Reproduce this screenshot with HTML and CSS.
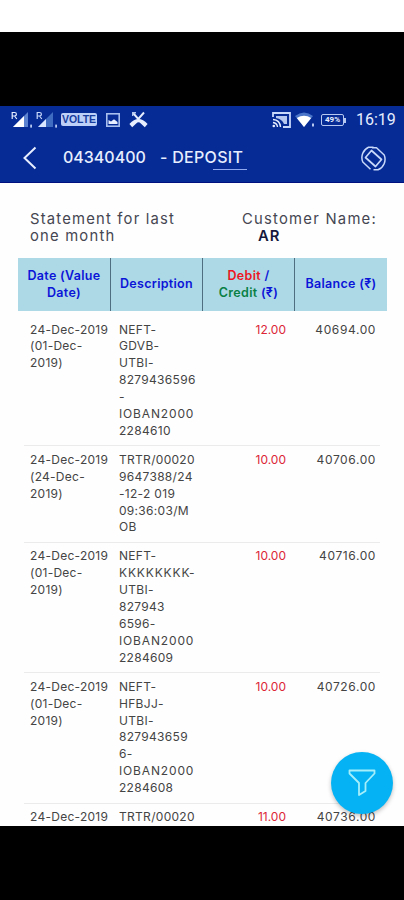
FILE: index.html
```
<!DOCTYPE html>
<html lang="en">
<head>
    <meta charset="UTF-8">
    <meta name="viewport" content="width=device-width, initial-scale=1.0">
    <title>Deposit statement</title>
    <link rel="stylesheet" href="styles.css">
</head>
<body>
<div class="phone">
  <header class="top">
    <div class="status">
      <svg class="signal" width="21" height="18" viewBox="0 0 21 18">
        <path d="M17 1V16H2Z" fill="#5c83cf"/><path d="M13 5V16H2Z" fill="#fff"/>
        <rect x="0" y="0" width="7" height="9" fill="#062b94"/>
        <path d="M1.2 8V1.5H3.6Q5.4 1.5 5.4 3.2T3.6 5H1.2M3.6 5L5.8 8" fill="none" stroke="#e7eeff" stroke-width="1.2"/>
        <rect x="19.2" y="13.6" width="1.8" height="3" fill="#b6c8f0"/>
      </svg>
      <svg class="signal" width="21" height="18" viewBox="0 0 21 18">
        <path d="M17 1V16H2Z" fill="#3f6bc0"/><path d="M10 8V16H2Z" fill="#d9e6ff"/>
        <rect x="0" y="0" width="7" height="9" fill="#062b94"/>
        <path d="M1.2 8V1.5H3.6Q5.4 1.5 5.4 3.2T3.6 5H1.2M3.6 5L5.8 8" fill="none" stroke="#c8d8fa" stroke-width="1.2"/>
        <rect x="19.2" y="13.6" width="1.8" height="3" fill="#b6c8f0"/>
      </svg>
      <span class="volte">VOLTE</span>
      <svg class="picture" width="14" height="14" viewBox="0 0 14 14">
        <rect x=".8" y=".8" width="12.4" height="12.4" fill="none" stroke="#a9c0ee" stroke-width="1.6"/>
        <path d="M2.5 11V7L5 8.5L8 6.2L11.5 9V11Z" fill="#e7eeff"/>
      </svg>
      <svg class="missed" width="19" height="17" viewBox="0 0 19 17">
        <path d="M4 2L9.3 8L15 1.5" fill="none" stroke="#e7eeff" stroke-width="1.9"/>
        <path d="M3.7 5V1.7H7" fill="none" stroke="#b6c8f0" stroke-width="1.4"/>
        <path d="M.4 13Q9.5 3 18.6 13L15.8 16.2L11.8 12.6Q9.5 10 7.2 12.6L3.2 16.2Z" fill="#e7eeff"/>
      </svg>
      <svg class="cast" width="19" height="16" viewBox="0 0 19 16">
        <path d="M1 5V1H18V15H11" fill="none" stroke="#c8d8fa" stroke-width="1.8"/>
        <path d="M4 4H15V12H12Q10 7 4 6Z" fill="#b6c8f0"/>
        <path d="M1 7.5Q8 8 8.5 15M1 10.5Q5 11 5.5 15" fill="none" stroke="#e7eeff" stroke-width="1.4"/>
        <circle cx="1.8" cy="14" r="1.3" fill="#e7eeff"/>
      </svg>
      <svg class="wifi" width="20" height="16" viewBox="0 0 20 16">
        <path d="M0 4Q9 -3 18 4L9 15Z" fill="#4a75c8"/>
        <path d="M1.8 6Q9 1.4 16.2 6L9 15Z" fill="#fff"/>
        <rect x="17" y="11.5" width="2" height="3" fill="#b6c8f0"/>
      </svg>
      <span class="battery">49%</span>
      <span class="time">16:19</span>
    </div>
    <div class="titlebar">
      <svg width="14" height="24" viewBox="0 0 14 24"><path d="M12.5 1.5L1.5 12L12.5 22.5" fill="none" stroke="#e7eeff" stroke-width="2"/></svg>
      <h1 class="account">04340400</h1>
      <h1 class="kind">- DEPOSIT</h1>
      <svg class="rotate" width="25" height="25" viewBox="0 0 25 25" fill="none" stroke="#c8d8fa">
        <path d="M10.5 4.5L20.5 13.5L14.5 20.5L4.5 11.5Z" stroke-width="1.7" stroke-linejoin="round"/>
        <path d="M12.5 1.2H7.5A11.4 11.4 0 0 0 1.8 16L9.5 23.2M12.5 23.8H17A11.4 11.4 0 0 0 23.2 9L15.5 1.8H11" stroke-width="1.5" stroke-linejoin="round"/>
      </svg>
    </div>
  </header>

  <main class="content">
    <div class="intro">
      <p class="period">Statement for last<br>one month</p>
      <p class="customer">Customer Name:<br><b>AR</b></p>
    </div>
    <div class="row head">
      <div>Date (Value<br>Date)</div>
      <div>Description</div>
      <div><span><span class="debit">Debit</span> /<br><span class="credit">Credit</span> (₹)</span></div>
      <div>Balance (₹)</div>
    </div>
    <div class="list">
      <div class="row">
        <div class="date">24-Dec-2019<br>(01-Dec-<br>2019)</div>
        <div class="desc">NEFT-<br>GDVB-<br>UTBI-<br>8279436596<br>-<br><span class="wide">IOBAN2000</span><br>2284610</div>
        <div class="amount">12.00</div>
        <div class="balance">40694.00</div>
      </div>
      <div class="row">
        <div class="date">24-Dec-2019<br>(24-Dec-<br>2019)</div>
        <div class="desc">TRTR/00020<br>9647388/24<br>-12-2 019<br>09:36:03/M<br>OB</div>
        <div class="amount">10.00</div>
        <div class="balance">40706.00</div>
      </div>
      <div class="row">
        <div class="date">24-Dec-2019<br>(01-Dec-<br>2019)</div>
        <div class="desc">NEFT-<br><span class="wide">KKKKKKKK-</span><br>UTBI-<br>827943<br>6596-<br><span class="wide">IOBAN2000</span><br>2284609</div>
        <div class="amount">10.00</div>
        <div class="balance">40716.00</div>
      </div>
      <div class="row">
        <div class="date">24-Dec-2019<br>(01-Dec-<br>2019)</div>
        <div class="desc">NEFT-<br>HFBJJ-<br>UTBI-<br>827943659<br>6-<br><span class="wide">IOBAN2000</span><br>2284608</div>
        <div class="amount">10.00</div>
        <div class="balance">40726.00</div>
      </div>
      <div class="row">
        <div class="date">24-Dec-2019</div>
        <div class="desc">TRTR/00020</div>
        <div class="amount">11.00</div>
        <div class="balance">40736.00</div>
      </div>
    </div>
    <button class="filter" aria-label="Filter">
      <svg width="28" height="28" viewBox="0 0 28 28"><path d="M1.5 1.5H26.5V4.5L17.5 14V22L11 26V14L1.5 4.5Z" fill="none" stroke="#a5eefa" stroke-width="1.8" stroke-linejoin="round"/></svg>
    </button>
  </main>
</div>
</body>
</html>
```
FILE: styles.css
```
*{
  box-sizing: border-box;
}
body{
  margin: 0;
  background: #fff;
  font-family: Inter, "Open Sans", sans-serif;
}
.phone{
  height: 868px;
  margin-top: 32px;
  padding: 74px 0;
  background: #000;
  display: flex;
  flex-direction: column;
}
.top{
  height: 77px;
  flex: none;
  background: #062b94;
  border-bottom: 1px solid #00107e;
  color: #e7eeff;
}
.status{
  display: flex;
  align-items: center;
  height: 27px;
  padding: 0 9px 0 11px;
}
.signal{
  margin-right: 4px;
}
.volte{
  width: 36px;
  height: 13px;
  border-radius: 2px;
  background: #bdd0f7;
  color: #173d9f;
  font: bold 10.5px/13px "Liberation Sans", sans-serif;
  text-align: center;
}
.picture{
  margin-left: 9px;
}
.missed{
  margin-left: 9px;
}
.cast{
  margin-left: auto;
}
.wifi{
  margin-left: 4px;
}
.battery{
  position: relative;
  width: 23px;
  height: 12px;
  margin-left: 6px;
  border: 1px solid #b6c8f0;
  border-radius: 2px;
  font: bold 8px/10px Roboto, sans-serif;
  text-align: center;
}
.battery::after{
  content: "";
  position: absolute;
  right: -3px;
  top: 3px;
  width: 2px;
  height: 5px;
  background: #b6c8f0;
}
.time{
  width: 39px;
  margin-left: 12px;
  font: 16px/20px Roboto, sans-serif;
  white-space: nowrap;
}
.titlebar{
  display: flex;
  align-items: center;
  height: 49px;
  padding: 1px 18px 0 23px;
}
.titlebar h1{
  margin: 0 0 3px;
  font-size: 16px;
  line-height: 26px;
  font-weight: 500;
  white-space: nowrap;
}
.titlebar .account{
  width: 83px;
  margin-left: 26px;
}
.titlebar .kind{
  position: relative;
  margin-left: 14px;
  letter-spacing: .3px;
}
.kind::after{
  content: "";
  position: absolute;
  right: -4px;
  bottom: 0;
  width: 34px;
  height: 1px;
  background: #91aaf0;
}
.rotate{
  margin-left: auto;
}
.content{
  position: relative;
  flex: 1;
  min-height: 0;
  overflow: hidden;
  background: #fefefe;
}
.intro{
  display: flex;
  justify-content: space-between;
  height: 75px;
  padding: 28px 27px 0 30px;
  font-size: 14.8px;
  line-height: 17px;
  color: #454652;
}
.intro p{
  margin: 0;
}
.period{
  letter-spacing: 1.2px;
}
.customer{
  letter-spacing: 1.25px;
}
.customer b{
  margin-left: 16px;
  font-weight: 600;
  letter-spacing: 1px;
  color: #15183c;
}
.row{
  display: grid;
  grid-template-columns: 89px 91px 76px 1fr;
  margin: 0 24px;
  padding: 5.5px 4px 5.5px 6px;
  border-bottom: 1px solid #ebebeb;
  font-size: 12px;
  line-height: 16.9px;
  color: #444;
  white-space: nowrap;
}
.head{
  grid-template-columns: 92px 92px 92px 1fr;
  height: 53px;
  margin: 0 17px 0 18px;
  padding: 0;
  border: 0;
  background: #add9e6;
  color: #0b15d8;
  font-size: 12.5px;
  font-weight: 600;
  letter-spacing: .3px;
  text-align: center;
}
.head div{
  display: flex;
  align-items: center;
  justify-content: center;
}
.head div + div{
  border-left: 1px solid #4f6f80;
}
.debit{
  color: #ed1622;
}
.credit{
  color: #098044;
}
.list{
  padding-top: 5px;
}
.date{
  letter-spacing: .27px;
}
.desc{
  letter-spacing: .3px;
}
.wide{
  letter-spacing: .85px;
}
.amount{
  color: #dc2638;
  text-align: right;
}
.balance{
  text-align: right;
  letter-spacing: .6px;
}
/* floats over the last rows */
.filter{
  position: absolute;
  right: 11px;
  bottom: 12px;
  width: 62px;
  height: 62px;
  padding: 0;
  border: 0;
  border-radius: 50%;
  background: #05b3f4;
  box-shadow: 0 2px 4px rgba(0,0,0,0.25);
  display: flex;
  align-items: center;
  justify-content: center;
}
```
